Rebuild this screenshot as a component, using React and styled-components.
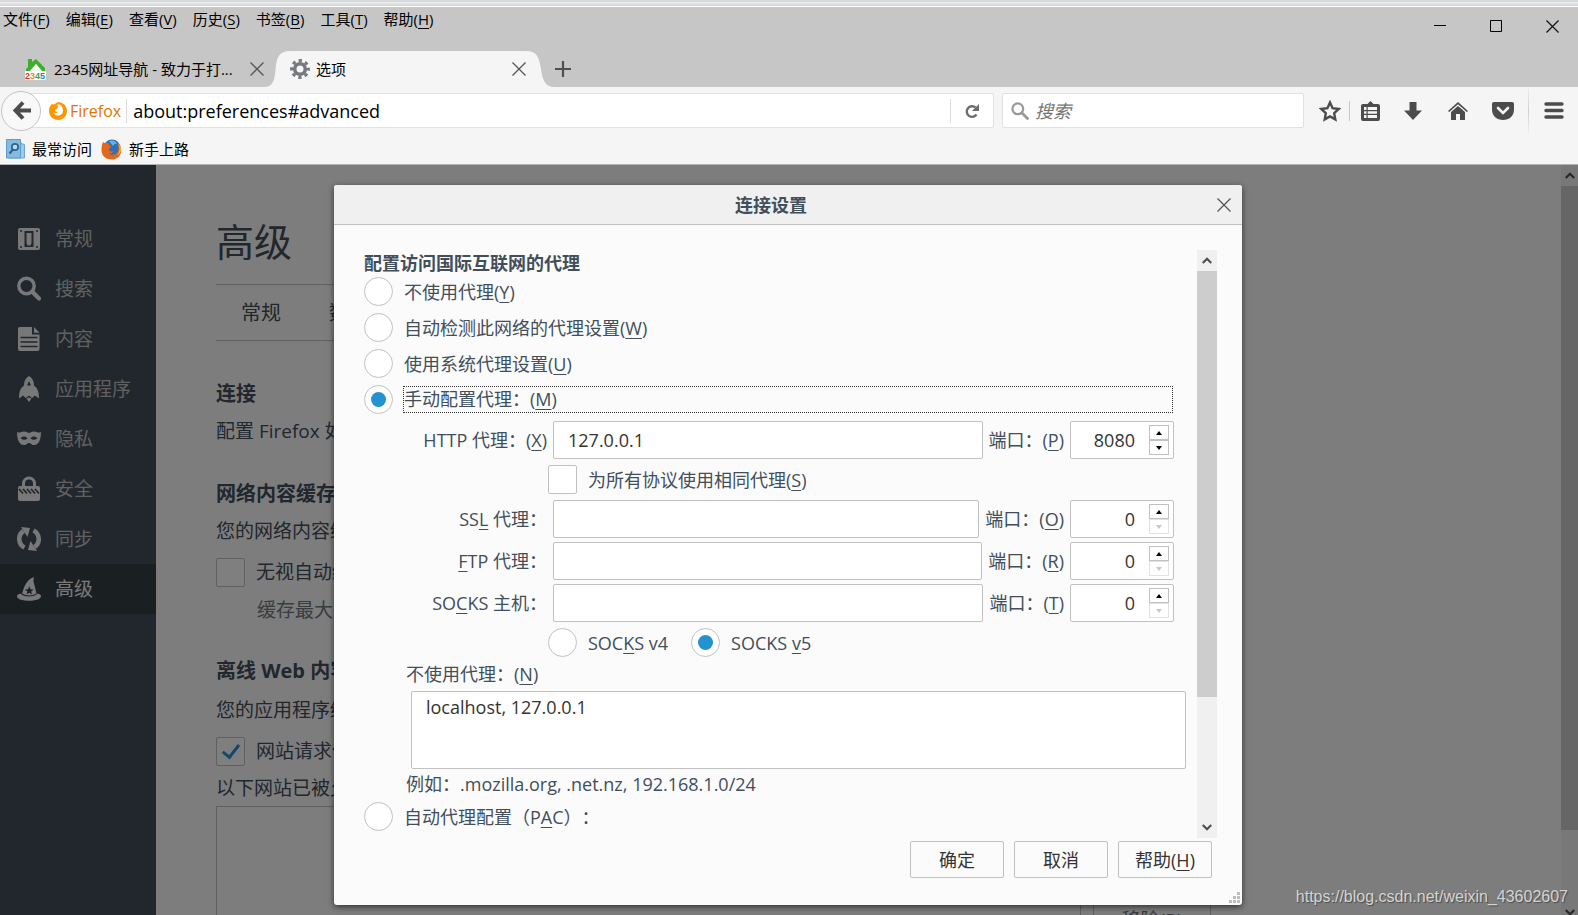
import React from "react";
import styled, { createGlobalStyle, css } from "styled-components";

const GlobalStyle = createGlobalStyle`
  * {
    box-sizing: border-box;
  }
  body {
    margin: 0;
    overflow: hidden;
    font-family: "Open Sans", "Noto Sans CJK SC", sans-serif;
    font-size: 18px;
    line-height: 24px;
    text-spacing-trim: space-all;
    color: #424e5a;
  }
  button, input, textarea {
    font: inherit;
    color: inherit;
    margin: 0;
  }
  button {
    padding: 0;
    border: 0;
    background: none;
  }
  svg {
    display: block;
    flex: none;
  }
`;

/* ---------- icons ---------- */

const CloseIcon = ({ size = 14, color = "#555" }) => (
  <svg width={size} height={size} viewBox="0 0 14 14" fill="none" stroke={color} strokeWidth="1.3">
    <path d="M0.5 0.5 13.5 13.5M13.5 0.5 0.5 13.5" />
  </svg>
);

const HouseLogo = () => (
  <svg width="21" height="21" viewBox="0 0 21 21">
    <path d="M3 0h4v3l4-3L20 9v3h-3l-6-7-6 7H1v-2l2-2z" fill="#3fae2a" />
    <path d="M11 5l6 7H5z" fill="#f4fbf2" />
    <rect y="12" width="21" height="9" rx="1" fill="#fff" />
    <text y="20" fontSize="9" fontWeight="700" fontFamily="Liberation Sans, sans-serif">
      <tspan fill="#e5322d">2</tspan>
      <tspan fill="#f08a1d">3</tspan>
      <tspan fill="#35a83a">4</tspan>
      <tspan fill="#2f7fd8">5</tspan>
    </text>
  </svg>
);

const GearIcon = () => (
  <svg width="20" height="20" viewBox="0 0 20 20" fill="none" stroke="#75797e">
    <circle cx="10" cy="10" r="5.300" strokeWidth="3.600" />
    <circle cx="10" cy="10" r="8.400" strokeWidth="3" strokeDasharray="3.300 3.298" strokeDashoffset="1.650" />
  </svg>
);

const PlusIcon = () => (
  <svg width="16" height="16" viewBox="0 0 16 16" stroke="#4f4f4f" strokeWidth="2.200">
    <path d="M8 0v16M0 8h16" />
  </svg>
);

const BackIcon = () => (
  <svg width="19" height="19" viewBox="0 0 19 19" fill="none" stroke="#4c4c4c" strokeWidth="4">
    <path d="M11 1.500 3.500 9.500 11 17.500M3.500 9.500H19" />
  </svg>
);

const FirefoxMark = () => (
  <svg width="18" height="18" viewBox="0 0 18 18">
    <path d="M3 2c1 .5 1.500.5 2.500.3C7 .6 9.500 0 11.500.4 15.500 1.300 18 5 18 9c0 5-4 9-9 9s-9-4-9-9c0-3 1-5.500 3-7z" fill="#ff9500" />
    <path d="M8 3c3-1.500 6 1.500 6 5.500 0 3.500-2.500 5-5 5-2 0-4-1-4.500-3 1.500 1 3.500.8 4.500-.7-1.500 0-3-.5-3-1.500s1.500-1 2.500-2.300C9.300 4.800 9 3.700 8 3z" fill="#fff" />
  </svg>
);

const FirefoxColor = () => (
  <svg width="21" height="21" viewBox="0 0 21 21">
    <circle cx="11" cy="9" r="8.500" fill="#2f6fb8" />
    <path d="M8 2c4-1.500 7 0 8 3-2-.5-3 .5-4 2z" fill="#61b3ea" />
    <path d="M2 3c1 1 2 1 3 1 2-.5 3 .5 3 1.500s2 1.500 2 2.500-2 1-2 2.500c0 2 2.500 2.500 5 1.500-1 2-3.500 3-5.500 2.500 3 2.500 9 1.500 10-4 .4-2.500-.5-5-1.500-7 3 2 5 6 4 10-1 4.500-5 7-9.500 7C4.500 20.500.5 16.500.5 11 .5 8 1 5 2 3z" fill="#e4681b" />
    <path d="M16.500 4c3 3 3 9.500-1 12.500 5-1 6-8.500 1-12.500z" fill="#ffcb2e" />
  </svg>
);

const MostVisitedIcon = () => (
  <svg width="19" height="20" viewBox="0 0 19 20">
    <path d="M3 .5h11l1 4 3.500 1V19H3z" fill="#9fc9e6" stroke="#6fa6cf" />
    <path d="M.5.5h14v18.500H.5z" fill="#86bbe0" stroke="#5f9bc9" />
    <circle cx="9" cy="8" r="3.200" fill="#b9dcf2" stroke="#2e6596" strokeWidth="1.800" />
    <path d="M7 10.500 3.500 14.500" stroke="#2e6596" strokeWidth="2.200" />
  </svg>
);

const ReloadIcon = () => (
  <svg width="14" height="16" viewBox="0 0 14 16" fill="none">
    <path d="M11.500 11.500A5.300 5.300 0 1 1 10.500 4.500" stroke="#6d6d6d" strokeWidth="2.400" />
    <path d="M14 1v7H7z" fill="#6d6d6d" />
  </svg>
);

const MagnifierIcon = () => (
  <svg width="18" height="18" viewBox="0 0 18 18" fill="none" stroke="#999">
    <circle cx="6.800" cy="6.800" r="5.400" strokeWidth="2.200" />
    <path d="M11 11l5.500 5.500" strokeWidth="2.800" strokeLinecap="round" />
  </svg>
);

const StarIcon = () => (
  <svg width="22" height="22" viewBox="0 0 22 22" fill="none" stroke="#4c4c4c" strokeWidth="2.400">
    <path d="M11 2.500l2.600 5.700 6.100.8-4.500 4.200 1.100 6.200L11 16.400l-5.300 3 1.100-6.200L2.300 9l6.100-.8z" />
  </svg>
);

const ListIcon = () => (
  <svg width="19" height="20" viewBox="0 0 19 20" fill="#4c4c4c">
    <path d="M2 3h4.500L9.500 0l3 3H17a2 2 0 0 1 2 2v13a2 2 0 0 1-2 2H2a2 2 0 0 1-2-2V5a2 2 0 0 1 2-2z" />
    <path d="M3 6h13v11H3z" fill="#f5f5f5" />
    <path d="M3 9h13v1.200H3zM3 12.800h13V14H3zM5.500 6h1.200v11H5.500z" />
  </svg>
);

const DownloadIcon = () => (
  <svg width="18" height="18" viewBox="0 0 18 18" fill="#4c4c4c">
    <path d="M5.500 0h7v8.500H18L9 18 0 8.500h5.500z" />
  </svg>
);

const HomeIcon = () => (
  <svg width="20" height="18" viewBox="0 0 20 18" fill="#4c4c4c">
    <path d="M10 0 20 9l-1.200 1L10 2.200 1.200 10 0 9z" />
    <path d="M10 4l7 6v8h-5v-6H8v6H3v-8z" />
  </svg>
);

const PocketIcon = () => (
  <svg width="22" height="18" viewBox="0 0 22 18">
    <path d="M2 0h18a2 2 0 0 1 2 2v5.500C22 14 17 18 11 18S0 14 0 7.500V2a2 2 0 0 1 2-2z" fill="#4c4c4c" />
    <path d="M6 6l5 5 5-5" fill="none" stroke="#f5f5f5" strokeWidth="2.600" strokeLinecap="round" />
  </svg>
);

const MenuIcon = () => (
  <svg width="20" height="17" viewBox="0 0 20 17" stroke="#4c4c4c" strokeWidth="3.400" strokeLinecap="round">
    <path d="M2 2h16M2 8.500h16M2 15h16" />
  </svg>
);

const Chevron = ({ down, color }) => (
  <svg width="10" height="7" viewBox="0 0 10 7" fill="none" stroke={color} strokeWidth="2.200">
    <path d={down ? "M.8 1 5 5.200 9.200 1" : "M.8 6 5 1.800 9.200 6"} />
  </svg>
);

const Triangle = ({ down }) => (
  <svg width="6" height="4" viewBox="0 0 6 4" fill="currentColor">
    <path d={down ? "M0 0h6L3 4z" : "M0 4h6L3 0z"} />
  </svg>
);

const categoryIcons = {
  general: (
    <>
      <path fillRule="evenodd" d="M3 2h18a2 2 0 0 1 2 2v18a2 2 0 0 1-2 2H3a2 2 0 0 1-2-2V4a2 2 0 0 1 2-2zM7.500 5v16h9V5z" />
      <path d="M9.500 7h5v10l-1 2.500h-3l-1-2.500z" />
      <g fill="#424f5a">
        <circle cx="4" cy="5" r="1" />
        <circle cx="20" cy="5" r="1" />
        <circle cx="4" cy="21" r="1" />
        <circle cx="20" cy="21" r="1" />
      </g>
    </>
  ),
  search: (
    <g fill="none" stroke="currentColor">
      <circle cx="9.500" cy="10" r="7.700" strokeWidth="3.400" />
      <path d="M15.500 16l6.500 6.500" strokeWidth="4.200" strokeLinecap="round" />
    </g>
  ),
  content: (
    <>
      <path d="M3 1h12v7.500h7.500V23a2 2 0 0 1-2 2H3a2 2 0 0 1-2-2V3a2 2 0 0 1 2-2z" />
      <path d="M17 1l5.500 5.800H17z" />
      <path d="M3.500 11.500h17M3.500 16h17M3.500 20.500h17" stroke="#424f5a" strokeWidth="1.700" />
    </>
  ),
  apps: (
    <>
      <path fillRule="evenodd" d="M12 0c3.500 2 5 5.500 5 9.500 3 2.500 5 5 5 13l-4-3-3 2.500-3-2.500-3 2.500-3-2.500-4 3c0-8 2-10.500 5-13C7 5.500 8.500 2 12 0zM12 5l-2 4.500h4z" />
      <path d="M9.500 22.500l2.500-1 2.500 1L12 26z" />
    </>
  ),
  privacy: (
    <path fillRule="evenodd" d="M0 6c3 1.500 4-.5 7-.5S10.500 7 12 7s2-1.500 5-1.500 4 2 7 .5c0 7-2 13-7 13-3 0-3-2-5-2s-2 2-5 2c-5 0-7-6-7-13zM3.500 12c2 2.300 5 2.300 7 .5-1.500-3-5-2.500-7-.5zM20.500 12c-2 2.300-5 2.300-7 .5 1.500-3 5-2.500 7-.5z" />
  ),
  security: (
    <>
      <path d="M6.500 10V7.500a5.500 5.500 0 0 1 11 0V10" fill="none" stroke="currentColor" strokeWidth="3" />
      <path d="M3 10h18a2 2 0 0 1 2 2v11a2 2 0 0 1-2 2H3a2 2 0 0 1-2-2V12a2 2 0 0 1 2-2z" />
      <path d="M2 13l4 4.500M6 13l4 4.500M10 13l4 4.500M14 13l4 4.500M18 13l4 4.500" stroke="#424f5a" strokeWidth="1.700" />
    </>
  ),
  sync: (
    <g fill="none" stroke="currentColor" strokeWidth="4.600">
      <path d="M7.500 21.500A9.600 9.600 0 0 1 6.500 5" />
      <path d="M16.500 4.500A9.600 9.600 0 0 1 17.500 21" />
      <path d="M4 1l9 1-2.500 9z" fill="currentColor" stroke="none" />
      <path d="M20 25l-9-1 2.500-9z" fill="currentColor" stroke="none" />
    </g>
  ),
  advanced: (
    <>
      <path fillRule="evenodd" d="M17 1c-.5 3-1 4 .2 7l2.300 9.500c-4 2.500-10.500 2.500-14.500 0C8 9 9 4.500 17 1zM12.300 10.300l-1.200 2.900-3.100.2 2.400 2-.8 3 2.700-1.700 2.700 1.700-.8-3 2.400-2-3.100-.2z" />
      <path d="M3.500 17.500c3 4 14 4 17 0 2 .5 3.500 1.300 3.500 2.800 0 6-24 6-24 0 0-1.500 1.500-2.300 3.500-2.800z" />
    </>
  ),
};

/* ---------- browser chrome ---------- */

const Browser = styled.div`
  height: 100vh;
  display: flex;
  flex-direction: column;
  background: #f5f5f5;
`;

const TopStrip = styled.div`
  flex: none;
  height: 7px;
  border-top: 2px solid #d5dade;
  border-bottom: 1px solid #fff;
  background: linear-gradient(#efefef, #d2d2d2);
`;

const TitleBar = styled.header`
  flex: none;
  background: #c6c6c6;
  color: #000;
  font-size: 15px;
`;

const TitleRow = styled.div`
  height: 44px;
  display: flex;
  align-items: flex-start;
  justify-content: space-between;
`;

const MenuBar = styled.nav`
  display: flex;
  gap: 16px;
  padding-left: 3px;
  line-height: 24px;
`;

const WindowControls = styled.div`
  display: flex;
  gap: 4px;
`;

const WindowButton = styled.button`
  width: 52px;
  height: 38px;
  display: grid;
  place-items: center;
`;

const TabStrip = styled.div`
  display: flex;
  align-items: center;
  height: 36px;
`;

const Tab = styled.div`
  display: flex;
  align-items: center;
  gap: 8px;
  width: 264px;
  padding-left: 25px;
`;

const TabTitle = styled.span`
  flex: 1;
  white-space: nowrap;
  overflow: hidden;
`;

const ActiveTab = styled.div`
  display: flex;
  width: 291px;
  height: 36px;
`;

const ActiveTabBody = styled.div`
  flex: 1;
  display: flex;
  align-items: center;
  gap: 6px;
  background: #f5f5f5;
`;

const TabButton = styled.button`
  display: grid;
  place-items: center;
  height: 28px;
`;

const NavBar = styled.div`
  flex: none;
  display: flex;
  align-items: center;
  height: 47px;
  padding-left: 1px;
`;

const BackButton = styled.button`
  position: relative;
  flex: none;
  width: 40px;
  height: 40px;
  display: grid;
  place-items: center;
  border: 1px solid #c4c4c4;
  border-radius: 50%;
  background: #f8f8f8;
`;

const UrlBar = styled.div`
  flex: 1;
  min-width: 0;
  display: flex;
  align-items: center;
  height: 35px;
  margin-left: -20px;
  padding-left: 27px;
  border: 1px solid #e1e1e1;
  border-radius: 2px;
  background: #fff;
`;

const Identity = styled.span`
  display: flex;
  align-items: center;
  gap: 3px;
  padding-right: 5px;
  border-right: 1px solid #ddd;
  font-size: 16px;
  color: #e27500;
`;

const UrlInput = styled.input`
  flex: 1;
  min-width: 0;
  padding: 0 6px;
  border: 0;
  outline: 0;
  background: none;
  color: #000;
`;

const ReloadButton = styled.button`
  width: 43px;
  height: 24px;
  display: grid;
  place-items: center;
  border-left: 1px solid #ddd;
`;

const SearchBox = styled.label`
  flex: none;
  display: flex;
  align-items: center;
  gap: 6px;
  width: 302px;
  height: 35px;
  margin: 0 6px 0 8px;
  padding: 0 8px;
  border: 1px solid #e1e1e1;
  border-radius: 2px;
  background: #fff;

  input {
    flex: 1;
    min-width: 0;
    padding: 0;
    border: 0;
    outline: 0;
    background: none;
  }
  input::placeholder {
    color: #757575;
    font-style: italic;
  }
`;

const ToolButton = styled.button`
  flex: none;
  width: ${(p) => p.$width || 45}px;
  height: 40px;
  display: grid;
  place-items: center;
`;

const ToolDivider = styled.span`
  flex: none;
  width: 1px;
  height: ${(p) => (p.$tall ? 46 : 20)}px;
  margin-left: ${(p) => (p.$tall ? 3 : 0)}px;
  background: ${(p) => (p.$tall ? "linear-gradient(#eee, #d0d0d0, #eee)" : "#c8c8c8")};
`;

const BookmarkBar = styled.div`
  flex: none;
  display: flex;
  align-items: center;
  gap: 9px;
  height: 31px;
  padding-left: 6px;
  border-bottom: 1px solid #b0b4b4;
`;

const Bookmark = styled.a`
  display: flex;
  align-items: center;
  gap: 7px;
  font-size: 15px;
  color: #000;
  text-decoration: none;
`;

/* ---------- preferences page ---------- */

const Viewport = styled.div`
  flex: 1;
  min-height: 0;
  position: relative;
  display: flex;
  overflow: hidden;
  background: #fbfbfb;
`;

const Sidebar = styled.nav`
  flex: none;
  width: 156px;
  padding-top: 49px;
  background: #424f5a;
`;

const Category = styled.a`
  display: flex;
  align-items: center;
  gap: 14px;
  height: 50px;
  padding-left: 17px;
  font-size: 19px;
  text-decoration: none;
  color: ${(p) => (p.$active ? "#f2f2f2" : "#c1c1c1")};
  background: ${(p) => (p.$active ? "#343f44" : "none")};

  svg {
    color: #f0f0f0;
  }
`;

const Page = styled.main`
  flex: 1;
  min-width: 0;
  overflow: hidden;
  padding: 46px 350px 0 60px;
  font-size: 19px;
  white-space: nowrap;
`;

const PageTitle = styled.h1`
  margin: 0;
  font-size: 38px;
  font-weight: 400;
  line-height: 60px;
`;

const PageTabs = styled.div`
  display: flex;
  gap: 48px;
  margin-top: 13px;
  padding-left: 25px;
  border: solid #c1c1c1;
  border-width: 1px 0;

  button {
    height: 55px;
    font-size: 20px;
  }
`;

const SectionTitle = styled.h2`
  margin: ${(p) => p.$top}px 0 0;
  font-size: 20px;
  font-weight: 700;
  line-height: 26px;
`;

const PageText = styled.p`
  margin: ${(p) => p.$top || 11}px 0 0;
  line-height: 26px;
`;

const PageCheck = styled.label`
  display: flex;
  align-items: center;
  gap: 11px;
  margin-top: 13px;
  height: 30px;
`;

const CacheLimit = styled.p`
  margin: 10px 0 0 41px;
  line-height: 26px;
  color: #737980;
`;

const SiteRow = styled.div`
  display: flex;
  align-items: flex-start;
  gap: 12px;
  margin-top: 5px;
`;

const SiteList = styled.div`
  flex: 1;
  height: 160px;
  border: 1px solid #c1c1c1;
`;

const SiteActions = styled.div`
  padding-top: 70px;
`;

const RemoveButton = styled.button`
  width: 118px;
  height: 88px;
  border: 1px solid #c1c1c1;
  color: #777;
`;

const controlBox = css`
  appearance: none;
  flex: none;
  width: 29px;
  height: 29px;
  margin: 0;
  border: 1px solid #c1c1c1;
  background: #fff;
`;

const Checkbox = styled.input.attrs({ type: "checkbox" })`
  ${controlBox}
  border-radius: 2px;
  display: grid;
  place-items: center;

  &:checked::before {
    content: "";
    width: 7px;
    height: 14px;
    margin-bottom: 4px;
    border: solid #2292d0;
    border-width: 0 3px 3px 0;
    transform: rotate(38deg);
  }
`;

const Radio = styled.input.attrs({ type: "radio" })`
  ${controlBox}
  border-radius: 50%;
  display: grid;
  place-items: center;

  &:checked::before {
    content: "";
    width: 15px;
    height: 15px;
    border-radius: 50%;
    background: #2292d0;
  }
`;

/* ---------- scrollbar ---------- */

const ScrollTrack = styled.div`
  flex: none;
  display: flex;
  flex-direction: column;
  width: ${(p) => p.$width}px;
  margin-bottom: ${(p) => (p.$bleed ? -8 : 0)}px;
  background: #f0f0f0;
`;

const ScrollButton = styled.button`
  flex: none;
  height: 21px;
  display: grid;
  place-items: center;
`;

const ScrollThumb = styled.div`
  flex: ${(p) => p.$size};
  background: #cdcdcd;
`;

const ScrollRest = styled.div`
  flex: ${(p) => p.$size};
`;

function Scrollbar({ width, thumb, bleed }) {
  return (
    <ScrollTrack $width={width} $bleed={bleed}>
      <ScrollButton aria-label="向上滚动">
        <Chevron color="#505050" />
      </ScrollButton>
      <ScrollThumb $size={thumb} />
      <ScrollRest $size={100 - thumb} />
      <ScrollButton aria-label="向下滚动">
        <Chevron down color="#505050" />
      </ScrollButton>
    </ScrollTrack>
  );
}

/* ---------- dialog ---------- */

const Overlay = styled.div`
  position: absolute;
  inset: 0;
  display: flex;
  justify-content: center;
  padding: 20px 2px 10px 0;
  background: rgba(0, 0, 0, 0.5);
`;

const Dialog = styled.section`
  display: flex;
  flex-direction: column;
  width: min(908px, 92%);
  border-radius: 3px;
  background: #fbfbfb;
  box-shadow: 0 2px 6px rgba(0, 0, 0, 0.6);
`;

const DialogHeader = styled.header`
  flex: none;
  display: flex;
  align-items: center;
  height: 40px;
  padding: 0 11px;
  border-bottom: 1px solid #c1c1c1;
  border-radius: 3px 3px 0 0;
  background: #f0f0f0;

  h2 {
    flex: 1;
    margin: 0;
    padding-right: 20px;
    font-size: 18px;
    text-align: center;
  }
`;

const DialogBody = styled.div`
  flex: 1;
  min-height: 0;
  display: flex;
  margin: 25px 25px 0 30px;
`;

const Settings = styled.form`
  flex: 1;
  min-width: 0;
  overflow: hidden;
  padding-right: 11px;
`;

const GroupTitle = styled.h3`
  margin: 1px 0 2px;
  font-size: 18px;
  line-height: 24px;
`;

const RadioRow = styled.div`
  display: flex;
  align-items: center;
  gap: 10px;
  height: 29px;
  margin-bottom: 7px;
`;

const RadioLabel = styled.label`
  padding: 0 1px;
  ${(p) =>
    p.$focused &&
    css`
      flex: 1;
      margin-right: 13px;
      padding: 0;
      line-height: 25px;
      border: 1px dotted #333;
    `}
`;

const ManualGroup = styled.div`
  margin: 0 12px 0 39px;
`;

const ProxyRow = styled.div`
  display: flex;
  align-items: center;
  gap: 6px;
  height: 38px;
  margin-bottom: 4px;
`;

const HostLabel = styled.label`
  flex: none;
  width: 144px;
  text-align: right;
  white-space: nowrap;
`;

const TextInput = styled.input`
  flex: 1;
  min-width: 0;
  height: 38px;
  padding: 0 14px;
  border: 1px solid #c1c1c1;
  border-radius: 2px;
  background: #fff;
  color: #333;
`;

const Spinner = styled.div`
  flex: none;
  display: flex;
  align-items: center;
  width: 104px;
  height: 38px;
  padding: 0 4px;
  border: 1px solid #c1c1c1;
  border-radius: 2px;
  background: #fff;

  input {
    appearance: textfield;
    flex: 1;
    min-width: 0;
    padding: 0 14px 0 0;
    border: 0;
    outline: 0;
    background: none;
    color: #333;
    text-align: right;
  }
  input::-webkit-inner-spin-button {
    appearance: none;
    margin: 0;
  }
`;

const SpinButtons = styled.div`
  display: flex;
  flex-direction: column;
  width: 20px;

  button {
    height: 15px;
    display: grid;
    place-items: center;
    border: 1px solid #c1c1c1;
    color: #000;
  }
  button:disabled {
    border-color: #e2e2e2;
    color: #c8c8c8;
  }
`;

const OptionRow = styled.div`
  display: flex;
  align-items: center;
  gap: 11px;
  height: 29px;
  margin: ${(p) => p.$margin};
  padding-left: 145px;
`;

const VersionLabel = styled.label`
  margin-right: 12px;
`;

const BlockText = styled.label`
  display: block;
  padding-left: 3px;
  line-height: 24px;
`;

const BypassBox = styled.textarea`
  display: block;
  width: calc(100% - 47px);
  height: 78px;
  margin: 5px 0 3px 47px;
  padding: 3px 14px;
  border: 1px solid #c1c1c1;
  border-radius: 2px;
  background: #fff;
  color: #333;
  resize: none;
`;

const Example = styled.p`
  margin: 0 0 6px 42px;
  line-height: 24px;
`;

const DialogFooter = styled.footer`
  flex: none;
  display: flex;
  justify-content: flex-end;
  gap: 10px;
  padding: 3px 30px 0 0;
`;

const DialogButton = styled.button`
  width: 94px;
  height: 37px;
  border: 1px solid #c1c1c1;
  border-radius: 2px;
  color: #333;
`;

const Grip = styled.div`
  flex: none;
  display: flex;
  justify-content: flex-end;
  align-items: flex-end;
  height: 27px;
  padding: 0 2px 2px 0;
`;

const Key = styled.u`
  text-underline-offset: 3px;
  text-decoration-thickness: 1px;
  text-decoration-skip-ink: none;
`;

const Watermark = styled.div`
  position: absolute;
  right: 10px;
  bottom: 6px;
  font-family: "Liberation Sans", sans-serif;
  font-size: 16px;
  color: #d4d4d4;
  text-shadow: 1px 1px 1px rgba(0, 0, 0, 0.4);
`;

const menus = [
  ["文件", "F"],
  ["编辑", "E"],
  ["查看", "V"],
  ["历史", "S"],
  ["书签", "B"],
  ["工具", "T"],
  ["帮助", "H"],
];

const categories = [
  ["general", "常规"],
  ["search", "搜索"],
  ["content", "内容"],
  ["apps", "应用程序"],
  ["privacy", "隐私"],
  ["security", "安全"],
  ["sync", "同步"],
  ["advanced", "高级"],
];

function ProxyFields({ id, label, host = "", portKey, port = 0 }) {
  return (
    <ProxyRow>
      <HostLabel htmlFor={id}>{label}</HostLabel>
      <TextInput id={id} defaultValue={host} />
      <label htmlFor={`${id}-port`}>
        端口：(<Key>{portKey}</Key>)
      </label>
      <Spinner>
        <input id={`${id}-port`} type="number" min="0" defaultValue={port} />
        <SpinButtons>
          <button type="button" aria-label="增加">
            <Triangle />
          </button>
          <button type="button" aria-label="减少" disabled={port === 0}>
            <Triangle down />
          </button>
        </SpinButtons>
      </Spinner>
    </ProxyRow>
  );
}

function ConnectionDialog() {
  return (
    <Dialog role="dialog" aria-labelledby="dialog-title">
      <DialogHeader>
        <h2 id="dialog-title">连接设置</h2>
        <button aria-label="关闭">
          <CloseIcon />
        </button>
      </DialogHeader>
      <DialogBody>
        <Settings>
          <GroupTitle>配置访问国际互联网的代理</GroupTitle>
          <RadioRow>
            <Radio id="none" name="proxy" />
            <RadioLabel htmlFor="none">
              不使用代理(<Key>Y</Key>)
            </RadioLabel>
          </RadioRow>
          <RadioRow>
            <Radio id="detect" name="proxy" />
            <RadioLabel htmlFor="detect">
              自动检测此网络的代理设置(<Key>W</Key>)
            </RadioLabel>
          </RadioRow>
          <RadioRow>
            <Radio id="system" name="proxy" />
            <RadioLabel htmlFor="system">
              使用系统代理设置(<Key>U</Key>)
            </RadioLabel>
          </RadioRow>
          <RadioRow>
            <Radio id="manual" name="proxy" defaultChecked />
            <RadioLabel htmlFor="manual" $focused>
              手动配置代理：(<Key>M</Key>)
            </RadioLabel>
          </RadioRow>
          <ManualGroup>
            <ProxyFields id="http" label={<>HTTP 代理：(<Key>X</Key>)</>} host="127.0.0.1" portKey="P" port={8080} />
            <OptionRow $margin="6px 0">
              <Checkbox id="share" />
              <label htmlFor="share">
                为所有协议使用相同代理(<Key>S</Key>)
              </label>
            </OptionRow>
            <ProxyFields id="ssl" label={<>SS<Key>L</Key> 代理：</>} portKey="O" />
            <ProxyFields id="ftp" label={<><Key>F</Key>TP 代理：</>} portKey="R" />
            <ProxyFields id="socks" label={<>SO<Key>C</Key>KS 主机：</>} portKey="T" />
            <OptionRow $margin="6px 0 5px">
              <Radio id="v4" name="socks-version" />
              <VersionLabel htmlFor="v4">
                SOC<Key>K</Key>S v4
              </VersionLabel>
              <Radio id="v5" name="socks-version" defaultChecked />
              <label htmlFor="v5">
                SOCKS <Key>v</Key>5
              </label>
            </OptionRow>
            <BlockText htmlFor="bypass">
              不使用代理：(<Key>N</Key>)
            </BlockText>
          </ManualGroup>
          <BypassBox id="bypass" defaultValue="localhost, 127.0.0.1" />
          <Example>例如：.mozilla.org, .net.nz, 192.168.1.0/24</Example>
          <RadioRow>
            <Radio id="pac" name="proxy" />
            <RadioLabel htmlFor="pac">
              自动代理配置（P<Key>A</Key>C）：
            </RadioLabel>
          </RadioRow>
        </Settings>
        <Scrollbar width={20} thumb={78} />
      </DialogBody>
      <DialogFooter>
        <DialogButton>确定</DialogButton>
        <DialogButton>取消</DialogButton>
        <DialogButton>
          帮助(<Key>H</Key>)
        </DialogButton>
      </DialogFooter>
      <Grip>
        <svg width="11" height="11" viewBox="0 0 11 11" fill="#bdbdbd">
          <path d="M8 0h3v3H8zM8 4h3v3H8zM8 8h3v3H8zM4 4h3v3H4zM4 8h3v3H4zM0 8h3v3H0z" />
        </svg>
      </Grip>
    </Dialog>
  );
}

export default function App() {
  return (
    <Browser lang="zh-CN">
      <GlobalStyle />
      <TopStrip />
      <TitleBar>
        <TitleRow>
          <MenuBar>
            {menus.map(([name, key]) => (
              <button key={key}>
                {name}(<Key>{key}</Key>)
              </button>
            ))}
          </MenuBar>
          <WindowControls>
            <WindowButton aria-label="最小化">
              <svg width="12" height="12" viewBox="0 0 12 12" stroke="#000">
                <path d="M0 5.500h12" />
              </svg>
            </WindowButton>
            <WindowButton aria-label="最大化">
              <svg width="12" height="12" viewBox="0 0 12 12" fill="none" stroke="#000">
                <path d="M.5.5h11v11H.5z" />
              </svg>
            </WindowButton>
            <WindowButton aria-label="关闭窗口">
              <CloseIcon size={13} color="#111" />
            </WindowButton>
          </WindowControls>
        </TitleRow>
        <TabStrip>
          <Tab>
            <HouseLogo />
            <TabTitle>2345网址导航 - 致力于打...</TabTitle>
            <TabButton aria-label="关闭标签页">
              <CloseIcon />
            </TabButton>
          </Tab>
          <ActiveTab>
            <svg width="26" height="36" viewBox="0 0 27 36" preserveAspectRatio="none" fill="#f5f5f5">
              <path d="M0 36C9 36 11 30 12 18S16 0 27 0v36z" />
            </svg>
            <ActiveTabBody>
              <GearIcon />
              <TabTitle>选项</TabTitle>
              <TabButton aria-label="关闭标签页">
                <CloseIcon />
              </TabButton>
            </ActiveTabBody>
            <svg width="29" height="36" viewBox="0 0 29 36" fill="#f5f5f5">
              <path d="M29 36C19 36 17 30 15 18S11 0 0 0v36z" />
            </svg>
          </ActiveTab>
          <TabButton aria-label="新建标签页">
            <PlusIcon />
          </TabButton>
        </TabStrip>
      </TitleBar>
      <NavBar>
        <BackButton aria-label="后退">
          <BackIcon />
        </BackButton>
        <UrlBar>
          <Identity>
            <FirefoxMark />
            Firefox
          </Identity>
          <UrlInput aria-label="地址" defaultValue="about:preferences#advanced" />
          <ReloadButton aria-label="刷新">
            <ReloadIcon />
          </ReloadButton>
        </UrlBar>
        <SearchBox>
          <MagnifierIcon />
          <input placeholder="搜索" aria-label="搜索" />
        </SearchBox>
        <ToolButton $width={39} aria-label="收藏">
          <StarIcon />
        </ToolButton>
        <ToolDivider />
        <ToolButton $width={40} aria-label="书签列表">
          <ListIcon />
        </ToolButton>
        <ToolButton aria-label="下载">
          <DownloadIcon />
        </ToolButton>
        <ToolButton aria-label="主页">
          <HomeIcon />
        </ToolButton>
        <ToolButton aria-label="Pocket">
          <PocketIcon />
        </ToolButton>
        <ToolDivider $tall />
        <ToolButton $width={49} aria-label="菜单">
          <MenuIcon />
        </ToolButton>
      </NavBar>
      <BookmarkBar>
        <Bookmark href="#most">
          <MostVisitedIcon />
          最常访问
        </Bookmark>
        <Bookmark href="#start">
          <FirefoxColor />
          新手上路
        </Bookmark>
      </BookmarkBar>
      <Viewport>
        <Sidebar>
          {categories.map(([id, name]) => (
            <Category key={id} href={`#${id}`} $active={id === "advanced"}>
              <svg width="24" height="26" viewBox="0 0 24 26" fill="currentColor">
                {categoryIcons[id]}
              </svg>
              {name}
            </Category>
          ))}
        </Sidebar>
        <Page>
          <PageTitle>高级</PageTitle>
          <PageTabs>
            <button>常规</button>
            <button>数据反馈</button>
          </PageTabs>
          <SectionTitle $top={40}>连接</SectionTitle>
          <PageText>配置 Firefox 如何连接至国际互联网</PageText>
          <SectionTitle $top={37}>网络内容缓存</SectionTitle>
          <PageText>您的网络内容缓存</PageText>
          <PageCheck>
            <Checkbox />
            无视自动缓存管理
          </PageCheck>
          <CacheLimit>缓存最大为</CacheLimit>
          <SectionTitle $top={35}>离线 Web 内容和用户数据</SectionTitle>
          <PageText $top={13}>您的应用程序缓存</PageText>
          <PageCheck>
            <Checkbox defaultChecked />
            网站请求保存数据时提醒
          </PageCheck>
          <PageText $top={9}>以下网站已被允许</PageText>
          <SiteRow>
            <SiteList />
            <SiteActions>
              <RemoveButton>移除(R)</RemoveButton>
            </SiteActions>
          </SiteRow>
        </Page>
        <Scrollbar width={17} thumb={90} bleed />
        <Overlay>
          <ConnectionDialog />
        </Overlay>
        <Watermark>https://blog.csdn.net/weixin_43602607</Watermark>
      </Viewport>
    </Browser>
  );
}
